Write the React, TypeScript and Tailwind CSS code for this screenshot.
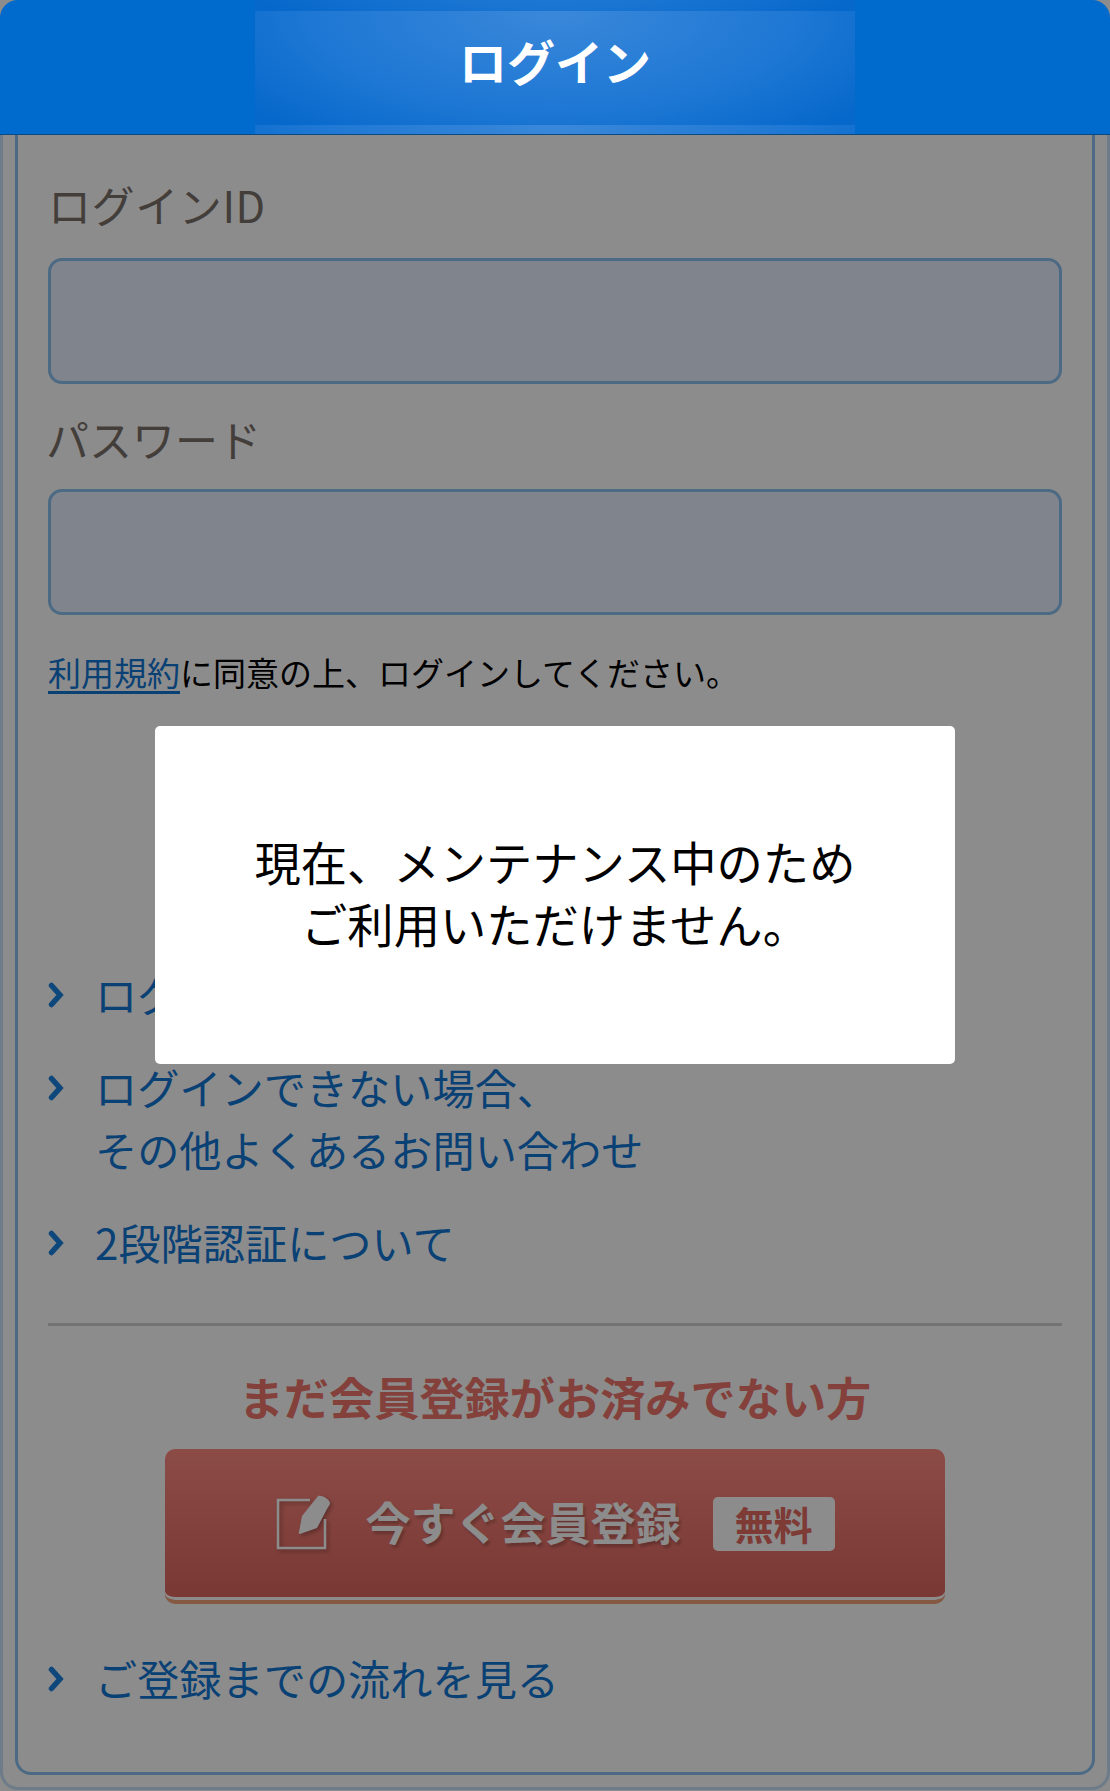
import { ReactNode } from 'react';

const font = "font-['Noto_Sans_CJK_JP','Noto_Sans',sans-serif]";

const Chevron = () => (
  <svg width="16" height="26" viewBox="0 0 16 26" className="shrink-0">
    <path d="M3.5 3.5 L12 13 L3.5 22.5" fill="none" stroke="#1b82e0" strokeWidth="5.5" strokeLinecap="round" strokeLinejoin="miter" />
  </svg>
);

const NavLink = ({ children }: { children: ReactNode }) => (
  <div className="flex items-start">
    <div className="w-[47px] h-[62px] flex items-center shrink-0">
      <Chevron />
    </div>
    <a className="-mt-[1px] text-[42.2px] leading-[62px] text-[#1277d6]">{children}</a>
  </div>
);

const PencilIcon = () => (
  <svg width="58" height="58" viewBox="0 0 58 58" className="shrink-0 drop-shadow-[2px_2px_2px_rgba(0,0,0,0.3)]">
    <path d="M35 5 H3 V53 H50 V24" fill="none" stroke="#fff" strokeWidth="2.5" />
    <path d="M43 1 C47 0 54 4 55 8 C55 10 53 12 52 14 L42 33 L25 39 C24 39 23 38 24 37 L27 21 Z" fill="#fff" />
  </svg>
);

export default function App() {
  return (
    <div className={`relative h-[1791px] w-[1110px] overflow-hidden bg-white ${font}`}>
      <section className="h-[1790px] border-[3px] border-t-0 border-[#c8e2fa] rounded-[18px] pr-[12px] pl-[12px] pb-[12px]">
        <div className="h-full pt-[135px]">
          <div className="h-full border-[3px] border-t-0 border-[#8cc2f2] rounded-b-[16px] px-[30px]">
            <label className="block pt-[38px] h-[123px] text-[43px] leading-[62px] text-[#7a716b] tracking-[0.6px]">ログインID</label>
            <div className="h-[126px] rounded-[14px] border-[3px] border-[#8cc2f2] bg-[#e9f0ff]" />
            <label className="block pt-[23px] h-[105px] -ml-[2px] text-[43px] leading-[62px] text-[#7a716b]">パスワード</label>
            <div className="h-[126px] rounded-[14px] border-[3px] border-[#8cc2f2] bg-[#e9f0ff]" />
            <p className="mt-[32px] h-[50px] text-[33px] leading-[50px] text-[#000]">
              <a className="text-[#1277d6] underline underline-offset-[5px] decoration-[3px]">利用規約</a>
              に同意の上、ログインしてください。
            </p>

            <div className="mt-[267px] flex flex-col">
              <NavLink>ログイン情報をお忘れの方</NavLink>
              <div className="mt-[31px]">
                <NavLink>
                  ログインできない場合、
                  <br />
                  その他よくあるお問い合わせ
                </NavLink>
              </div>
              <div className="mt-[32px]">
                <NavLink>2段階認証について</NavLink>
              </div>
            </div>

            <div className="mt-[49px] border-t-[3px] border-[#d2d2d2]" />

            <h2 className="mt-[40px] text-center text-[45.2px] leading-[62px] font-bold text-[#f0766c]">
              まだ会員登録がお済みでない方
            </h2>

            <a className="mx-auto mt-[21px] flex h-[155px] w-[780px] items-center justify-center gap-[32px] rounded-[10px] border-b-[4px] border-[#f3a078] bg-gradient-to-b from-[#ff8a80] to-[#de6660] pb-[2px] shadow-[inset_0_-3px_0_#ffffff] text-white">
              <PencilIcon />
              <span className="mb-[4px] text-[45px] font-bold leading-none [text-shadow:2px_3px_3px_rgba(0,0,0,0.22)]">今すぐ会員登録</span>
              <span className="flex h-[54px] w-[122px] items-center justify-center rounded-[5px] bg-white text-[39px] font-bold text-[#e66a62]">
                無料
              </span>
            </a>

            <div className="mt-[44px]">
              <NavLink>ご登録までの流れを見る</NavLink>
            </div>
          </div>
        </div>
      </section>

      {/* dimmed overlay with the maintenance notice */}
      <div className="absolute inset-0 flex items-center justify-center bg-black/45 pb-[1px]">
        <div className="flex h-[338px] w-[800px] items-center justify-center rounded-[5px] bg-white pb-[7px] text-center text-[46.3px] leading-[62px] text-black">
          <p>
            現在、メンテナンス中のため
            <br />
            ご利用いただけません。
          </p>
        </div>
      </div>

      <header className="absolute inset-x-0 top-0 flex h-[135px] justify-center rounded-t-[18px] border-b border-[#0a4a80] bg-[#006bcc]">
        <div className="flex h-full w-[600px] items-center justify-center bg-[radial-gradient(ellipse_65%_140%_at_50%_0%,#3a88da_0%,#1f78d4_60%,#0668cb_100%)] bg-[length:100%_114px] bg-[position:0_11px] pb-[14px]">
          <h1 className="text-[48px] leading-none font-bold text-white">ログイン</h1>
        </div>
      </header>
    </div>
  );
}
